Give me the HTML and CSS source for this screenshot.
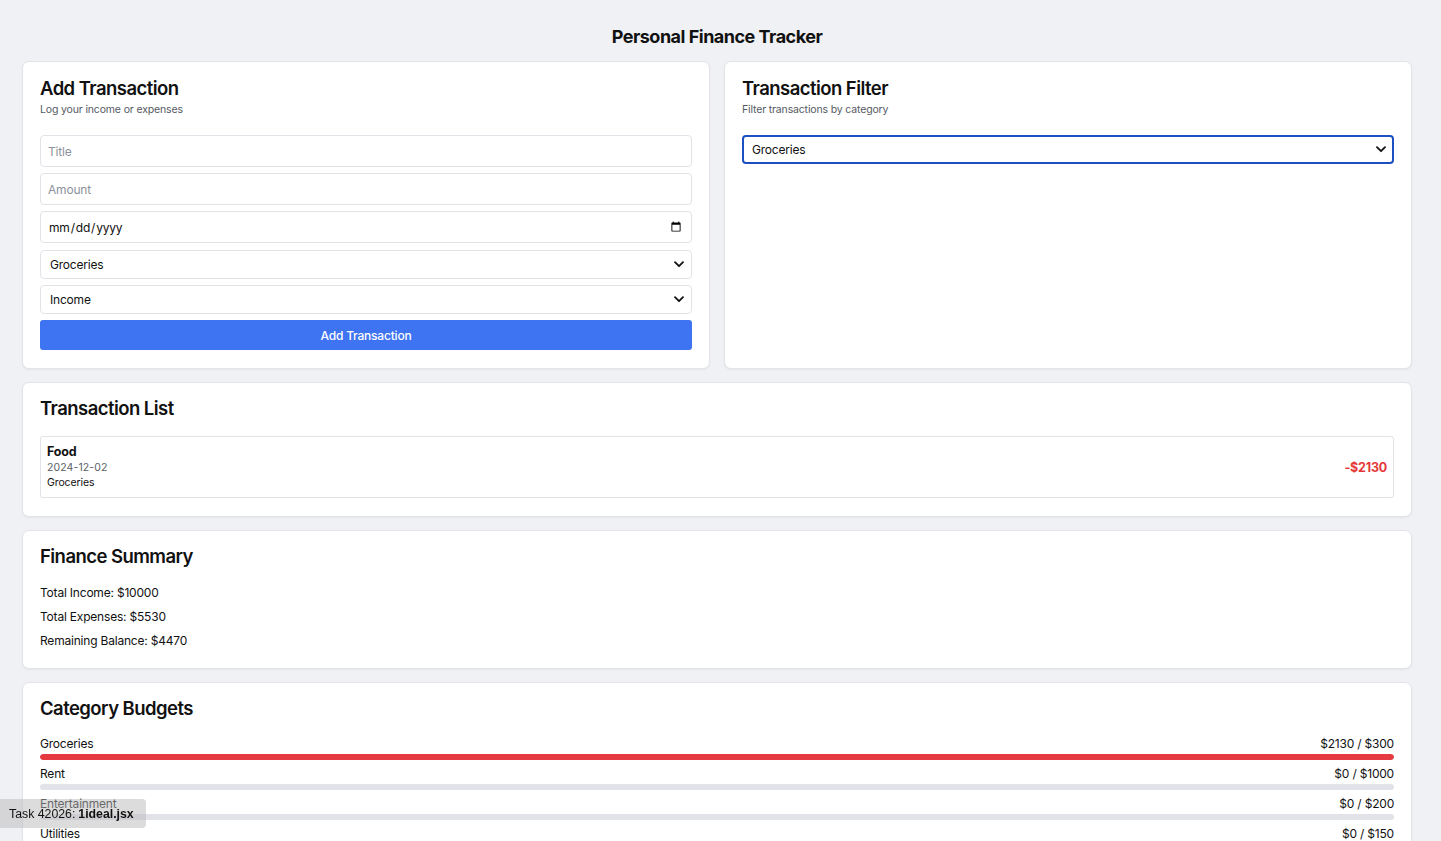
FILE: index.html
```html
<!DOCTYPE html>
<html lang="en">
<head>
<meta charset="utf-8">
<title>Personal Finance Tracker</title>
<link rel="stylesheet" href="styles.css">
</head>
<body>
<div class="app">
  <h1 class="page-title">Personal Finance Tracker</h1>
  <div class="top-row">
    <section class="card card-top">
      <h2 class="card-title">Add Transaction</h2>
      <p class="card-sub">Log your income or expenses</p>
      <div class="form">
        <input class="field" type="text" placeholder="Title">
        <input class="field" type="text" placeholder="Amount">
        <input class="field date" type="date">
        <div class="select-wrap">
          <select class="select"><option>Groceries</option></select>
          <svg class="chev" width="10" height="7" viewBox="0 0 10 7"><path d="M1 1.2l4 4 4-4" fill="none" stroke="#111" stroke-width="1.8" stroke-linecap="round" stroke-linejoin="round"/></svg>
        </div>
        <div class="select-wrap">
          <select class="select"><option>Income</option></select>
          <svg class="chev" width="10" height="7" viewBox="0 0 10 7"><path d="M1 1.2l4 4 4-4" fill="none" stroke="#111" stroke-width="1.8" stroke-linecap="round" stroke-linejoin="round"/></svg>
        </div>
        <button class="btn">Add Transaction</button>
      </div>
    </section>
    <section class="card card-top">
      <h2 class="card-title">Transaction Filter</h2>
      <p class="card-sub">Filter transactions by category</p>
      <div class="form">
        <div class="select-wrap">
          <select class="select focus"><option>Groceries</option></select>
          <svg class="chev" width="10" height="7" viewBox="0 0 10 7"><path d="M1 1.2l4 4 4-4" fill="none" stroke="#111" stroke-width="1.8" stroke-linecap="round" stroke-linejoin="round"/></svg>
        </div>
      </div>
    </section>
  </div>

  <section class="card">
    <h2 class="card-title">Transaction List</h2>
    <div class="tx">
      <div class="tx-info">
        <div class="tx-name">Food</div>
        <div class="tx-date">2024-12-02</div>
        <div class="tx-cat">Groceries</div>
      </div>
      <div class="tx-amt">-$2130</div>
    </div>
  </section>

  <section class="card">
    <h2 class="card-title">Finance Summary</h2>
    <div class="summary">
      <p>Total Income: $10000</p>
      <p>Total Expenses: $5530</p>
      <p>Remaining Balance: $4470</p>
    </div>
  </section>

  <section class="card">
    <h2 class="card-title">Category Budgets</h2>
    <div class="budgets">
      <div class="budget">
        <div class="budget-row"><span>Groceries</span><span>$2130 / $300</span></div>
        <div class="bar"><div class="fill over" style="width:100%"></div></div>
      </div>
      <div class="budget">
        <div class="budget-row"><span>Rent</span><span>$0 / $1000</span></div>
        <div class="bar"><div class="fill" style="width:0%"></div></div>
      </div>
      <div class="budget">
        <div class="budget-row"><span>Entertainment</span><span>$0 / $200</span></div>
        <div class="bar"><div class="fill" style="width:0%"></div></div>
      </div>
      <div class="budget">
        <div class="budget-row"><span>Utilities</span><span>$0 / $150</span></div>
        <div class="bar"><div class="fill" style="width:0%"></div></div>
      </div>
    </div>
  </section>
</div>
<div class="task-tag">Task 42026: <b>1ideal.jsx</b></div>
</body>
</html>
```
FILE: styles.css
```css
* { box-sizing: border-box; }
html, body { margin: 0; padding: 0; }
body {
  background: #f0f1f5;
  font-family: Inter, "Noto Sans", "Liberation Sans", sans-serif;
  color: #111;
}
.app {
  width: 1390px;
  margin-left: 22px;
  padding: 25px 0 40px;
  display: flex;
  flex-direction: column;
  gap: 13px;
}
.page-title {
  margin: 0 0 -1px;
  text-align: center;
  font-size: 18px;
  line-height: 24px;
  font-weight: 700;
  letter-spacing: -0.5px;
}
.top-row {
  display: grid;
  grid-template-columns: 1fr 1fr;
  gap: 14px;
}
.card {
  background: #fff;
  border: 1px solid #e3e4e8;
  border-radius: 7px;
  box-shadow: 0 1px 2px rgba(0,0,0,0.05);
  padding: 15px 17px 18px;
}
.card-top { padding-top: 16px; padding-bottom: 18px; }
.card-title {
  margin: 0;
  font-size: 18.5px;
  line-height: 20px;
  font-weight: 600;
  letter-spacing: -0.55px;
}
.card-sub {
  margin: 5px 0 0;
  font-size: 10.5px;
  line-height: 14px;
  color: #555a63;
  letter-spacing: -0.15px;
}
.form {
  margin-top: 18px;
  display: flex;
  flex-direction: column;
  gap: 6px;
}
.field {
  height: 32px;
  border: 1px solid #e2e3e8;
  border-radius: 4px;
  padding: 0 7px;
  font-family: inherit;
  font-size: 12px;
  letter-spacing: -0.2px;
  color: #111;
  background: #fff;
  outline: none;
}
.field::placeholder { color: #8d929b; }
.field.date { margin-bottom: 1px; }
.select-wrap { position: relative; }
.select {
  width: 100%;
  height: 29px;
  appearance: none;
  -webkit-appearance: none;
  border: 1px solid #e2e3e8;
  border-radius: 4px;
  padding: 0 9px;
  font-family: inherit;
  font-size: 12px;
  letter-spacing: -0.2px;
  color: #111;
  background: #fff;
  outline: none;
}
.select.focus {
  border: 2px solid #1d4fc4;
  padding: 0 8px;
}
.chev {
  position: absolute;
  right: 8px;
  top: 11px;
  pointer-events: none;
}
.btn {
  height: 30px;
  border: none;
  border-radius: 3px;
  background: #3e74f1;
  color: #fff;
  font-family: inherit;
  font-size: 12px;
  letter-spacing: -0.2px;
  font-weight: 500;
}
.tx {
  margin-top: 18px;
  border: 1px solid #e2e3e8;
  border-radius: 3px;
  padding: 7px 6px 7px;
  display: flex;
  justify-content: space-between;
  align-items: center;
}
.tx-name { font-size: 12.5px; line-height: 16px; font-weight: 700; letter-spacing: -0.2px; }
.tx-date { font-size: 10.5px; line-height: 16px; color: #5a5f68; letter-spacing: 0.1px; }
.tx-cat { font-size: 10.5px; line-height: 14px; letter-spacing: -0.1px; }
.tx-amt { font-size: 12.5px; font-weight: 700; color: #e53939; letter-spacing: -0.2px; }
.summary { margin-top: 17px; }
.summary p {
  margin: 0 0 4px;
  font-size: 12px;
  line-height: 20px;
  letter-spacing: -0.2px;
}
.summary p:last-child { margin-bottom: -1px; }
.budgets { margin-top: 18px; display: flex; flex-direction: column; gap: 6px; }
.budget-row {
  display: flex;
  justify-content: space-between;
  font-size: 12px;
  line-height: 16px;
  letter-spacing: -0.2px;
}
.bar {
  margin-top: 2px;
  height: 6px;
  border-radius: 3px;
  background: #e2e3e8;
  overflow: hidden;
}
.fill { height: 100%; border-radius: 3px; background: #3e74f1; }
.fill.over { background: #e53a40; }
.task-tag {
  position: fixed;
  left: 0;
  bottom: 13px;
  height: 29px;
  padding: 0 12px 0 9px;
  display: flex;
  align-items: center;
  background: rgba(185, 185, 188, 0.5);
  border-radius: 0 4px 4px 0;
  font-family: "Liberation Sans", Arial, sans-serif;
  font-size: 12.3px;
  color: #111;
}
.task-tag b { margin-left: 3px; }
```
